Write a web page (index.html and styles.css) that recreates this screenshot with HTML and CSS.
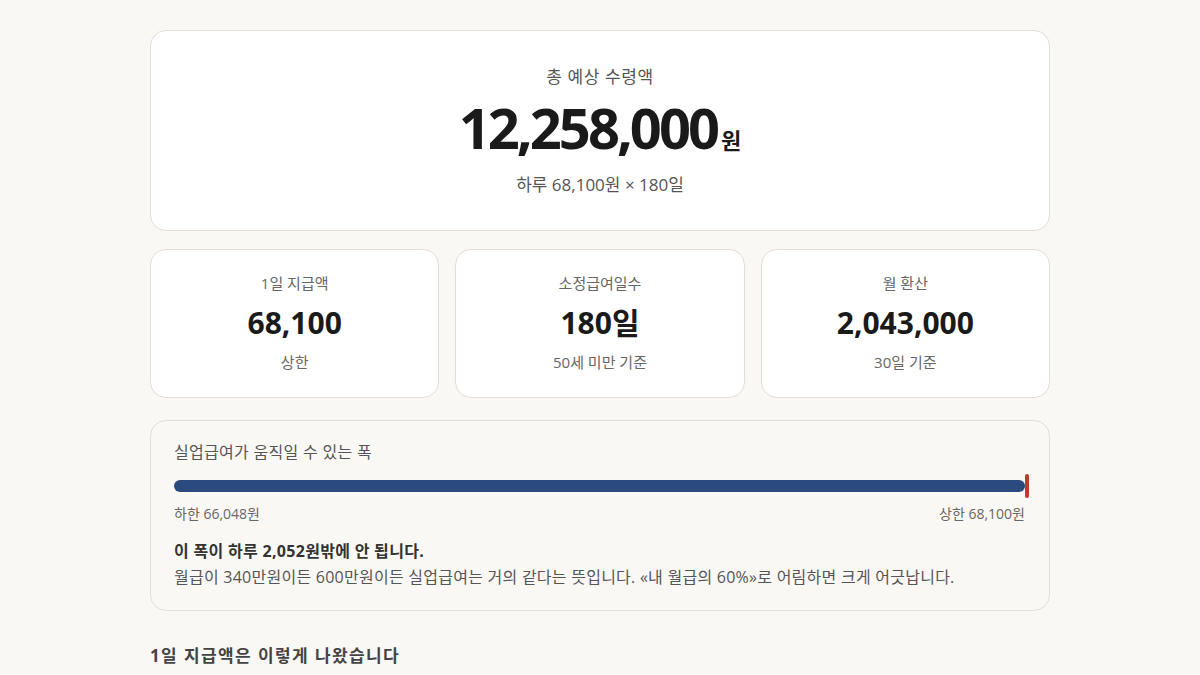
FILE: index.html
```html
<!DOCTYPE html>
<html lang="ko">
<head>
<meta charset="utf-8">
<link rel="stylesheet" href="styles.css">
</head>
<body>
<main class="wrap">
  <section class="card total">
    <div class="total-label">총 예상 수령액</div>
    <div class="total-value">12,258,000<span class="unit">원</span></div>
    <div class="total-sub">하루 68,100원 × 180일</div>
  </section>

  <section class="stats">
    <div class="card stat">
      <div class="stat-label">1일 지급액</div>
      <div class="stat-value">68,100</div>
      <div class="stat-sub">상한</div>
    </div>
    <div class="card stat">
      <div class="stat-label">소정급여일수</div>
      <div class="stat-value">180일</div>
      <div class="stat-sub">50세 미만 기준</div>
    </div>
    <div class="card stat">
      <div class="stat-label">월 환산</div>
      <div class="stat-value">2,043,000</div>
      <div class="stat-sub">30일 기준</div>
    </div>
  </section>

  <section class="range">
    <div class="range-title">실업급여가 움직일 수 있는 폭</div>
    <div class="bar-wrap">
      <div class="bar"></div>
      <div class="marker"></div>
    </div>
    <div class="range-labels">
      <span>하한 66,048원</span>
      <span>상한 68,100원</span>
    </div>
    <p class="range-strong">이 폭이 하루 2,052원밖에 안 됩니다.</p>
    <p class="range-text">월급이 340만원이든 600만원이든 실업급여는 거의 같다는 뜻입니다. «내 월급의 60%»로 어림하면 크게 어긋납니다.</p>
  </section>

  <h2 class="section-title">1일 지급액은 이렇게 나왔습니다</h2>
</main>
</body>
</html>
```

FILE: styles.css
```css
* { box-sizing: border-box; }
html, body { margin: 0; padding: 0; }
body {
  background: #faf8f5;
  font-family: "Open Sans", "Noto Sans CJK KR", sans-serif;
  color: #1a1a1a;
}
.wrap {
  width: 900px;
  margin: 0 auto;
  padding-top: 30px;
}
.card {
  background: #ffffff;
  border: 1px solid #e3ded6;
  border-radius: 16px;
}
.total {
  height: 201px;
  padding-top: 34px;
  text-align: center;
}
.total-label {
  font-size: 17px;
  line-height: 24px;
  letter-spacing: 0.6px;
  color: #555;
}
.total-value {
  margin-top: 6px;
  font-size: 56px;
  line-height: 64px;
  font-weight: 700;
  letter-spacing: -3px;
  color: #1a1a1a;
}
.unit {
  font-size: 22px;
  margin-left: 4px;
  letter-spacing: 0;
}
.total-sub {
  margin-top: 1px;
  font-size: 17px;
  line-height: 24px;
  color: #555;
}
.stats {
  display: grid;
  grid-template-columns: repeat(3, 1fr);
  gap: 16px;
  margin-top: 18px;
}
.stat {
  height: 149px;
  padding-top: 22px;
  text-align: center;
}
.stat-label {
  font-size: 15px;
  line-height: 22px;
  color: #666;
}
.stat-value {
  margin-top: 11px;
  font-size: 30px;
  line-height: 36px;
  font-weight: 700;
  color: #1a1a1a;
}
.stat-sub {
  margin-top: 10px;
  font-size: 15px;
  line-height: 22px;
  color: #666;
}
.range {
  margin-top: 22px;
  background: #faf8f5;
  border: 1px solid #e3ded6;
  border-radius: 16px;
  padding: 19px 24px 20px 23px;
}
.range-title {
  font-size: 16px;
  line-height: 24px;
  letter-spacing: 0.3px;
  color: #555;
}
.bar-wrap {
  position: relative;
  margin-top: 10px;
  height: 24px;
  display: flex;
  align-items: center;
}
.bar {
  flex: 1;
  height: 12px;
  background: #2b4a7e;
  border-radius: 6px;
}
.marker {
  position: absolute;
  right: -4px;
  top: 0;
  width: 4px;
  height: 24px;
  background: #c0392b;
  border-radius: 2px;
}
.range-labels {
  display: flex;
  justify-content: space-between;
  margin-top: 6px;
  font-size: 14px;
  line-height: 20px;
  color: #666;
}
.range-strong {
  margin: 14px 0 0;
  font-size: 16px;
  line-height: 26px;
  font-weight: 700;
  letter-spacing: 0.3px;
  color: #333;
}
.range-text {
  margin: 0;
  font-size: 16px;
  line-height: 26px;
  letter-spacing: 0.25px;
  color: #555;
}
.section-title {
  margin: 33px 0 0;
  font-size: 17px;
  line-height: 24px;
  font-weight: 700;
  letter-spacing: 1.4px;
  color: #444;
}
```
